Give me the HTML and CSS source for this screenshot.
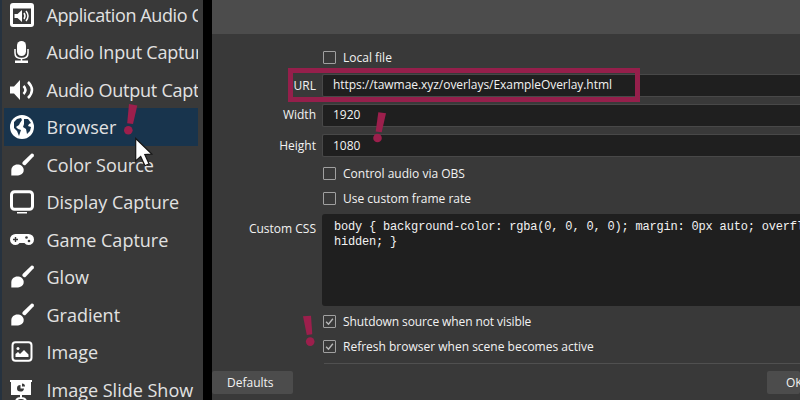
FILE: index.html
```html
<!DOCTYPE html>
<html lang="en">
<head>
<meta charset="utf-8">
<title>Browser source</title>
<link rel="stylesheet" href="styles.css">
</head>
<body>
<svg class="defs" aria-hidden="true">
  <symbol id="brush" viewBox="0 0 24 24"><path d="M21.300.800c1.600-.8 3.200.8 2.400 2.400L16 11.400c-1 1-2 1.200-3 .2s-.8-2 .2-3z"/><path d="M8.500 11.500c3.500.5 6 3.500 5 7C12.500 22 9 22.600 5 22.600H1.300V17c.2-3.500 3.200-6 7.200-5.500z"/></symbol>
</svg>
<div class="screen">
  <aside class="menu">
    <div class="item tighter"><svg class="icon" viewBox="0 0 24 24"><path fill-rule="evenodd" d="M3 0h18q3 0 3 3v18q0 3-3 3H3q-3 0-3-3V3q0-3 3-3zM3 5.500v15.500h18V5.500z"/><path d="M4.500 11h3l4.500-4v12l-4.500-4h-3z"/><path class="line thin" d="M14 10q2 3 0 6M16 8q4 5 0 10"/></svg><span>Application Audio Capture</span></div>
    <div class="item tight"><svg class="icon" viewBox="0 0 24 24"><rect x="7" y="1" width="9" height="15" rx="4.500"/><path class="line thin" d="M5 9v4q0 5.500 6.500 5.500T18 13V9M11.500 18v4"/><path d="M5 20.500h13v2.500H5z"/></svg><span>Audio Input Capture</span></div>
    <div class="item tight"><svg class="icon" viewBox="0 0 24 24"><path d="M0 8.500h4l6-6.500v20l-6-6.500H0z"/><path class="line wide" d="M13.500 8q4 4 0 8M18 4q8 8 0 16"/></svg><span>Audio Output Capture</span></div>
    <div class="item selected"><svg class="icon" viewBox="0 0 24 24"><circle cx="12" cy="12" r="12"/><path class="cut" d="M4 7l3-3 4-1 1 2-2 3-1 2-3 2 2 2 3 1-1 3-1 3-2-5-3-3zM14 4l4 0 3 4-2 1-1 2 3 1-1 4-3 3-1-5-3-2 1-3z"/></svg><span>Browser</span></div>
    <div class="item"><svg class="icon"><use href="#brush"/></svg><span>Color Source</span></div>
    <div class="item"><svg class="icon" viewBox="0 0 24 24"><rect class="line screen-line" x="1.500" y="1.800" width="21" height="17.500" rx="3"/><path d="M7 22h10v1.500H7z"/></svg><span>Display Capture</span></div>
    <div class="item"><svg class="icon" viewBox="0 0 24 24"><path d="M5.500 6h13a5.500 5.500 0 0 1 0 11c-2 0-3-1-4-2H9.500c-1 1-2 2-4 2a5.500 5.500 0 0 1 0-11z"/><path class="cut" d="M4.800 9h1.400v1.800H8v1.400H6.200V14H4.800v-1.800H3v-1.400h1.800z"/><circle class="cut" cx="16.500" cy="9.500" r="1.300"/><circle class="cut" cx="19" cy="13" r="1.300"/></svg><span>Game Capture</span></div>
    <div class="item"><svg class="icon"><use href="#brush"/></svg><span>Glow</span></div>
    <div class="item"><svg class="icon"><use href="#brush"/></svg><span>Gradient</span></div>
    <div class="item"><svg class="icon" viewBox="0 0 24 24"><rect class="line" x="2.500" y="2.300" width="19" height="18.500" rx="3"/><circle cx="8" cy="8.500" r="1.500"/><path d="M5.500 17v-3l2.500-2 2 2 4-4 4.500 4.500V17z"/></svg><span>Image</span></div>
    <div class="item"><svg class="icon" viewBox="0 0 24 24"><path d="M0 2h22v2h-1v13H1V4H0z"/><path class="line" d="M11 16v4M6 24q0-4 5-4t5 4"/><path class="cut" d="M10.500 7v3.500H14a3.500 3.300 0 1 1-3.500-3.500zM12 5.500a3 3 0 0 1 3 3h-3z"/></svg><span>Image Slide Show</span></div>
  </aside>
  <main class="dialog">
    <div class="preview"></div>
    <div class="form">
      <div class="row"><span class="label"></span><span class="check"></span><span>Local file</span></div>
      <div class="row entry"><span class="label">URL</span><div class="field url">https://tawmae.xyz/overlays/ExampleOverlay.html</div></div>
      <div class="row entry width-row"><span class="label">Width</span><div class="field">1920</div></div>
      <div class="row entry"><span class="label">Height</span><div class="field">1080</div></div>
      <div class="row after-entry"><span class="label"></span><span class="check"></span><span>Control audio via OBS</span></div>
      <div class="row"><span class="label"></span><span class="check"></span><span>Use custom frame rate</span></div>
      <div class="row css-row"><span class="label">Custom CSS</span><div class="code">body { background-color: rgba(0, 0, 0, 0); margin: 0px auto; overflow:<br>hidden; }</div></div>
      <div class="row"><span class="label"></span><span class="check"><svg viewBox="0 0 13 13"><path d="M2.500 6.800l2.800 3 5.200-6.500"/></svg></span><span class="shutdown">Shutdown source when not visible</span></div>
      <div class="row"><span class="label"></span><span class="check"><svg viewBox="0 0 13 13"><path d="M2.500 6.800l2.800 3 5.200-6.500"/></svg></span><span>Refresh browser when scene becomes active</span></div>
      <div class="rule"></div>
    </div>
    <footer class="actions"><div class="button defaults">Defaults</div><div class="button ok">OK</div></footer>
  </main>
  <div class="highlight"></div>
  <svg class="annotations" viewBox="0 0 800 400">
    <g class="mark"><path d="M129 104l8.300 1.500-4.300 18.500-5.800-.8z"/><circle cx="128.300" cy="130.300" r="4.300"/>
    <path d="M378.300 112.300l7.700 1-4.300 19-6-.8z"/><circle cx="377.500" cy="138" r="4.300"/>
    <path d="M303 316.300l8-.5 1.300 18.500-5.500.6z"/><circle cx="310.200" cy="341.600" r="4.300"/></g>
    <path class="pointer" d="M135.700 138.500v22.500l5-4.600 4.300 9.300 4-1.900-4.200-9.200 7-.6z"/>
  </svg>
</div>
</body>
</html>
```
FILE: styles.css
```css
* { box-sizing: border-box; }
body { margin: 0; background: #000; font-family: "Open Sans", "Noto Sans", sans-serif; color: #f2f2f2; }
.defs { position: absolute; width: 0; height: 0; }
.screen { position: relative; display: flex; width: 800px; height: 400px; overflow: hidden; background: #000; }
.menu { width: 203px; flex: none; height: 400px; overflow: hidden; padding: 0 5px 0 2px; background: #393939; border-left: 2px solid #26323f; }
.item { display: flex; align-items: center; gap: 12.5px; height: 37.5px; padding-left: 6px; overflow: hidden; white-space: nowrap; font-size: 18px; color: #e2e2e2; }
.item:first-child { margin-top: -4.1px; }
.tighter { letter-spacing: -.4px; }
.tight { letter-spacing: -.24px; }
.selected { background: #18344d; --surface: #18344d; }
.icon { width: 24px; height: 24px; flex: none; fill: #fff; }
.icon .line { fill: none; stroke: #fff; stroke-width: 2; }
.icon .thin { stroke-width: 1.5; }
.icon .wide { stroke-width: 2.5; }
.icon .screen-line { stroke-width: 3; }
.icon .cut { fill: var(--surface, #393939); }
.dialog { flex: none; width: 588px; height: 400px; margin-left: 9px; background: #393939; font-size: 12px; overflow: hidden; }
.preview { height: 34px; background: #4c4c4c; }
.form { padding-top: 11px; height: 330px; }
.row { display: flex; align-items: center; height: 25px; line-height: 17px; white-space: nowrap; }
.label { width: 104px; margin-right: 6px; text-align: right; flex: none; }
.entry { height: 30px; }
.after-entry { margin-top: 1px; }
.field { flex: 1; height: 23px; padding: 2px 10px; background: #1f1f1f; border: 1px solid #484848; border-right: 0; border-radius: 2px 0 0 2px; }
.url { letter-spacing: -.05px; padding-top: 1px; }
.width-row .label { padding-bottom: 2px; }
.width-row .field { padding-top: 1px; }
.check { display: block; width: 13px; height: 13px; margin: 0 7px 0 1px; border: 1px solid #a0a0a0; border-radius: 1px; flex: none; }
.check svg { display: block; width: 11px; height: 11px; fill: none; stroke: #b8b8b8; stroke-width: 1.6; }
.shutdown { letter-spacing: -.1px; }
.css-row { height: 92px; margin: 3px 0; align-items: flex-start; }
.css-row .label { padding-top: 6px; }
.code { flex: 1; height: 92px; padding: 6px 12px; overflow: hidden; background: #1f1f1f; border-radius: 3px 0 0 3px; font: 12px/15px "Liberation Mono", monospace; letter-spacing: -.19px; }
.rule { height: 1px; margin: 4px 0 0 112px; background: #505050; }
.actions { display: flex; justify-content: space-between; padding-top: 7px; }
.button { height: 23px; line-height: 23px; background: #4c4c4c; border-radius: 2px; }
.defaults { width: 81px; padding-left: 15px; }
.ok { width: 33px; padding-left: 19px; overflow: hidden; }
.highlight { position: absolute; left: 288px; top: 68px; width: 352px; height: 34px; border: 5px solid #951f4b; }
.annotations { position: absolute; left: 0; top: 0; width: 800px; height: 400px; }
.mark { fill: #9c1f4c; }
.pointer { fill: #fff; stroke: #151515; stroke-width: 1.2; }
```
